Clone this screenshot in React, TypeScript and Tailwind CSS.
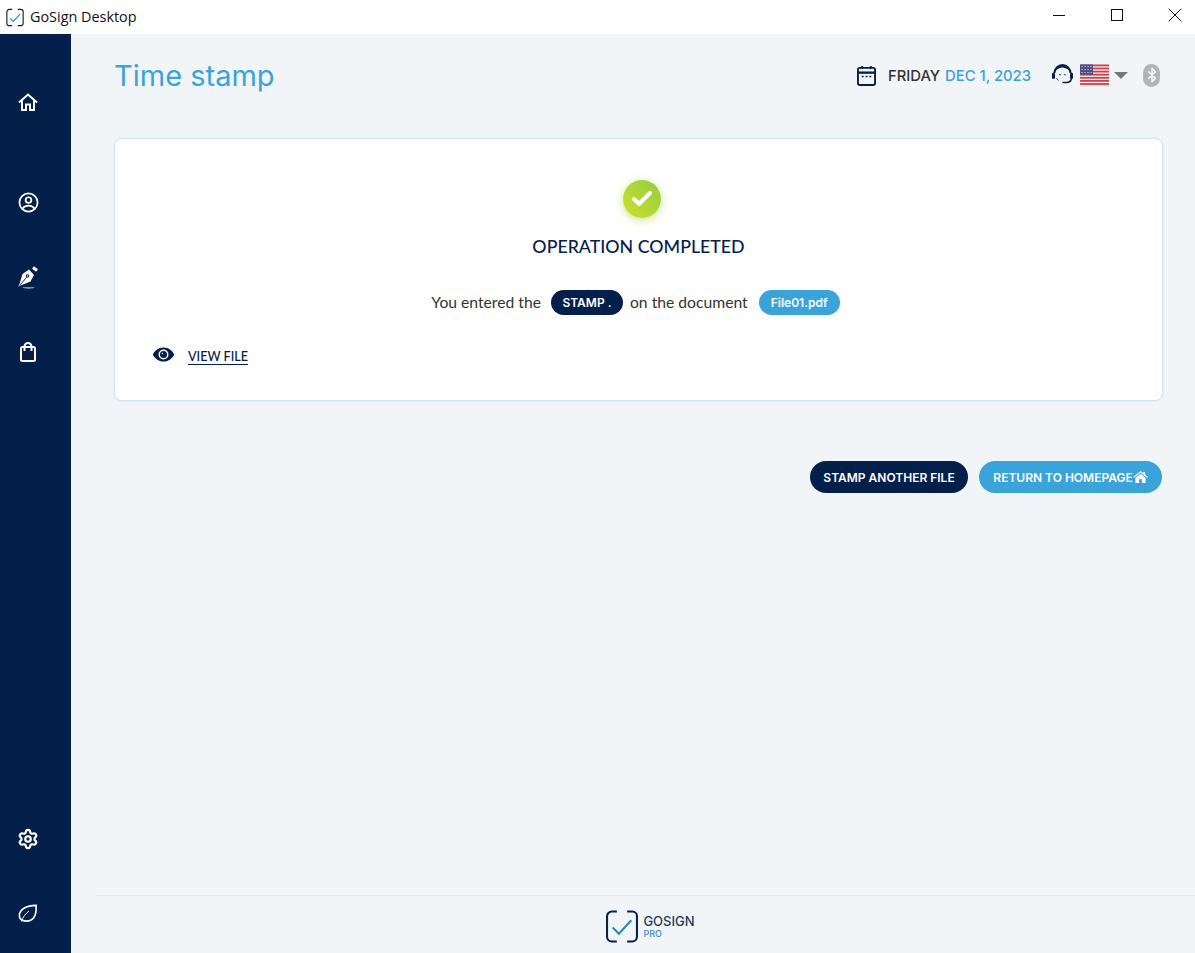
import { Bluetooth, Check, Settings, X } from "lucide-react";

function AppLogo({ className }: { className: string }) {
  return (
    <svg viewBox="0 0 32 32" fill="none" className={className}>
      <path d="M11 1.500H6A4.500 4.500 0 0 0 1.500 6v20A4.500 4.500 0 0 0 6 30.500h5M21 1.500h5A4.500 4.500 0 0 1 30.500 6v20a4.500 4.500 0 0 1-4.500 4.500h-5" stroke="#04204a" strokeWidth="2" />
      <path d="M7 17l6 6L25 10" stroke="#2f86b5" strokeWidth="2" />
    </svg>
  );
}

function HomeOutline() {
  return (
    <svg viewBox="0 0 20 18" fill="none" stroke="white" strokeWidth="2" className="h-[18px] w-[20px]">
      <path d="M1 9.500L10 1.500l9 8" />
      <path d="M4 7.500V17h4v-5.500h4V17h4V7.500" />
    </svg>
  );
}

function UserCircle() {
  return (
    <svg viewBox="0 0 22 22" fill="none" stroke="white" strokeWidth="1.800" className="h-[21px] w-[21px]">
      <circle cx="11" cy="11" r="9.500" />
      <circle cx="11" cy="8.500" r="3" />
      <path d="M4.500 17.500c1.500-2.300 3.800-3.300 6.500-3.300s5 1 6.500 3.300" />
    </svg>
  );
}

function PenNib() {
  return (
    <svg viewBox="0 0 22 24" className="h-[24px] w-[22px]" fill="white">
      <path d="M5.500 9L12 4.500l5 5.500-3.500 6.500L3.500 20.500l-1.500 1L1.500 21 2.500 19z" />
      <path d="M16 2.500l4 3" stroke="white" strokeWidth="3" />
      <circle cx="10.500" cy="11" r="1.800" fill="#04204a" />
      <circle cx="10.500" cy="11" r=".8" />
      <path d="M2.500 20.500l7-8" stroke="#04204a" strokeWidth=".9" />
      <path d="M5 22.500h13c-3.500 1.200-9.500 1.200-13 0z" />
    </svg>
  );
}

function Bag() {
  return (
    <svg viewBox="0 0 18 20" fill="none" stroke="white" strokeWidth="2" className="h-[20px] w-[18px]">
      <rect x="2" y="5" width="14" height="14" rx="1.500" />
      <path d="M5.500 9V4.500a3.500 3.500 0 0 1 7 0V9" />
    </svg>
  );
}

function Leaf() {
  return (
    <svg viewBox="0 0 22 22" fill="none" stroke="white" strokeWidth="1.700" className="h-[21px] w-[21px]">
      <path d="M20 2.500c.5 8-1 16.500-10.500 16.500C5 19 2 16.500 2.500 12.500 3 7 9 2.500 20 2.500z" />
      <path d="M4.500 19.500C6 15 9 11 12.500 8.500" strokeWidth="1" />
    </svg>
  );
}

function CalendarIcon() {
  return (
    <svg viewBox="0 0 20 22" fill="none" className="h-[21px] w-[19px]">
      <rect x="1" y="3" width="18" height="18" rx="2" stroke="#04204a" strokeWidth="2" />
      <path d="M1 8h18" stroke="#04204a" strokeWidth="2.500" />
      <path d="M5.500 1v3M14.500 1v3" stroke="#04204a" strokeWidth="2" />
      <path d="M5 12h2M9 12h2M13 12h2" stroke="#04204a" strokeWidth="1.600" />
    </svg>
  );
}

function Headset() {
  return (
    <svg viewBox="0 0 23 21" fill="none" className="mt-[-3px] h-[23px] w-[23px]">
      <path fill="#04204a" d="M2.500 10a9 9 0 0 1 18 0h-2c0-3-2.500-5-7-5.500-4.500.500-7 2.500-7 5.500z" />
      <rect x="1" y="9.500" width="3" height="6.500" rx="1.500" fill="#04204a" />
      <rect x="19" y="9.500" width="3" height="6.500" rx="1.500" fill="#04204a" />
      <path d="M20.500 15.500c-.5 2.500-2.500 4-5 4h-4" stroke="#04204a" strokeWidth="1.500" />
      <path d="M5.500 15c.5 1 1 1.700 2 2.500" stroke="#04204a" strokeWidth=".8" />
      <path d="M9 11v1.200M14 11v1.200" stroke="#04204a" strokeWidth="1.300" />
    </svg>
  );
}

function UsFlag() {
  const stripes = [0, 1, 2, 3, 4, 5, 6];
  return (
    <svg viewBox="0 0 29 22" className="h-[23px] w-[29px]">
      <rect width="29" height="21" fill="#f4f0f0" />
      <rect y="21" width="29" height="1" fill="#d8d8dc" />
      {stripes.map((i) => (
        <rect key={i} y={i * 3.100} width="29" height="1.800" fill="#c9404f" />
      ))}
      <rect width="13" height="10" fill="#4a4f86" />
      {[2, 5, 8].map((y) =>
        [2, 5, 8, 11].map((x) => <rect key={`${x}-${y}`} x={x - 0.500} y={y - 0.500} width="1" height="1" fill="#e8e8f2" />)
      )}
    </svg>
  );
}

function Eye() {
  return (
    <svg viewBox="0 0 24 16" className="mt-[-1px] h-[15px] w-[23px]">
      <path fill="#04204a" d="M12 .500C6.500.500 2.500 4 .500 8c2 4 6 7.500 11.500 7.500S21.500 12 23.500 8C21.500 4 17.500.500 12 .500z" />
      <circle cx="12" cy="8" r="5.300" fill="white" />
      <circle cx="12" cy="8" r="3.800" fill="#04204a" />
      <circle cx="10.800" cy="6.800" r=".8" fill="white" />
    </svg>
  );
}

function HomeSolid() {
  return (
    <svg viewBox="0 0 16 13" className="mt-[-2px] h-[12px] w-[15px]" fill="white">
      <path d="M8 0l3 2.400V1h2v3l3 2.500-.8.900L8 1.700.8 7.400 0 6.500z" />
      <path d="M8 3l5.500 4.400V13H9.500V9h-3v4h-4V7.400z" />
    </svg>
  );
}

export default function App() {
  return (
    <div className="flex h-[953px] w-[1195px] flex-col overflow-hidden bg-[#f2f5f8] font-['Inter',sans-serif]">
      <div className="flex h-[34px] shrink-0 items-center bg-white pl-[6px]">
        <AppLogo className="h-[19px] w-[18px]" />
        <span className="ml-[6px] font-['Open_Sans',sans-serif] text-[14.400px] text-[#111]">GoSign Desktop</span>
        <div className="mb-[4px] ml-auto flex items-center gap-[46px] pr-[14px]">
          <div className="h-px w-[12px] bg-[#111]" />
          <div className="h-[12px] w-[12px] border border-[#111]" />
          <X size={24} strokeWidth={1} color="#111" className="mx-[-6px]" />
        </div>
      </div>

      <div className="flex min-h-0 flex-1">
        <aside className="flex w-[71px] shrink-0 flex-col items-center bg-[#04204a] pt-[59px] pr-[15px] pb-[29px] text-white">
          <HomeOutline />
          <div className="mt-[81px]"><UserCircle /></div>
          <div className="mt-[52px]"><PenNib /></div>
          <div className="mt-[53px]"><Bag /></div>
          <Settings size={22} strokeWidth={2.400} className="mt-auto" />
          <div className="mt-[53px] ml-[-2px]"><Leaf /></div>
        </aside>

        <main className="flex min-w-0 flex-1 flex-col">
          <div className="flex flex-1 flex-col pr-[33px] pl-[43px]">
            <header className="flex h-[104px] shrink-0 items-start justify-between">
              <h1 className="mt-[21px] text-[29px] leading-[42px] font-normal text-[#3aa3d9]">Time stamp</h1>
              <div className="mt-[29px] mr-[2px] flex items-center">
                <CalendarIcon />
                <span className="mt-[2px] ml-[12px] text-[14.800px] font-medium text-[#333]">FRIDAY</span>
                <span className="mt-[2px] ml-[5px] text-[14.800px] font-medium text-[#3aa3d9]">DEC 1, 2023</span>
                <div className="ml-[20px]"><Headset /></div>
                <div className="ml-[6px]"><UsFlag /></div>
                <div className="mt-[1px] ml-[5px] h-0 w-0 border-x-[7px] border-t-[7px] border-x-transparent border-t-[#777]" />
                <div className="ml-[15px] flex h-[23px] w-[17px] items-center justify-center rounded-full bg-[#b0b5ba]">
                  <Bluetooth size={16} strokeWidth={2} color="white" />
                </div>
              </div>
            </header>

            <section className="mr-[-1px] flex h-[263px] shrink-0 flex-col items-center rounded-[8px] border border-[#cfe6f5] bg-white pt-[41px] shadow-[0_0_0_1px_rgba(207,230,245,0.35)]">
              <div className="ml-[6px] flex h-[38px] w-[38px] items-center justify-center rounded-full bg-linear-to-tr from-[#cfdf2a] to-[#8fce3f] shadow-[0_2px_10px_rgba(160,210,60,0.6)]">
                <Check size={24} strokeWidth={4} color="white" />
              </div>
              <h2 className="mt-[16px] font-['Lato',sans-serif] text-[17.800px] leading-[24px] font-medium text-[#04204a]">OPERATION COMPLETED</h2>
              <div className="mt-[32px] flex items-center pr-[6px] font-['Lato',sans-serif] text-[15.700px] text-[#333]">
                <span>You entered the</span>
                <span className="ml-[10px] flex h-[25px] w-[72px] items-center justify-center rounded-full bg-[#04204a] font-['Inter',sans-serif] text-[12px] font-semibold text-white">STAMP .</span>
                <span className="ml-[7px]">on the document</span>
                <span className="ml-[11px] flex h-[25px] w-[81px] items-center justify-center rounded-full bg-[#3aa3d9] font-['Inter',sans-serif] text-[12px] font-semibold text-white">File01.pdf</span>
              </div>
              <div className="mt-[30px] flex items-center self-start pl-[37px]">
                <Eye />
                <a className="mt-[4px] ml-[13px] border-b border-[#04204a] font-['Lato',sans-serif] text-[12.600px] leading-[15px] font-medium text-[#04204a]">VIEW FILE</a>
              </div>
            </section>

            <div className="mt-[60px] flex justify-end gap-[11px]">
              <button className="flex h-[32px] w-[158px] items-center justify-center rounded-full bg-[#04204a] pt-px text-[12px] font-semibold text-white">STAMP ANOTHER FILE</button>
              <button className="flex h-[32px] w-[183px] items-center justify-center rounded-full bg-[#3aa3d9] pt-px text-[12px] font-semibold text-white">RETURN TO HOMEPAGE<HomeSolid /></button>
            </div>
          </div>

          <footer className="ml-[25px] flex h-[58px] shrink-0 items-center justify-center border-t border-[#e3e8ed] pt-[4px] pl-[9px]">
            <AppLogo className="h-[33px] w-[34px]" />
            <div className="ml-[4px] flex flex-col">
              <span className="text-[13px] leading-[15px] font-medium text-[#1c3a5e]">GOSIGN</span>
              <span className="text-[9px] leading-[10px] font-medium text-[#3a8fbd]">PRO</span>
            </div>
          </footer>
        </main>
      </div>
    </div>
  );
}
